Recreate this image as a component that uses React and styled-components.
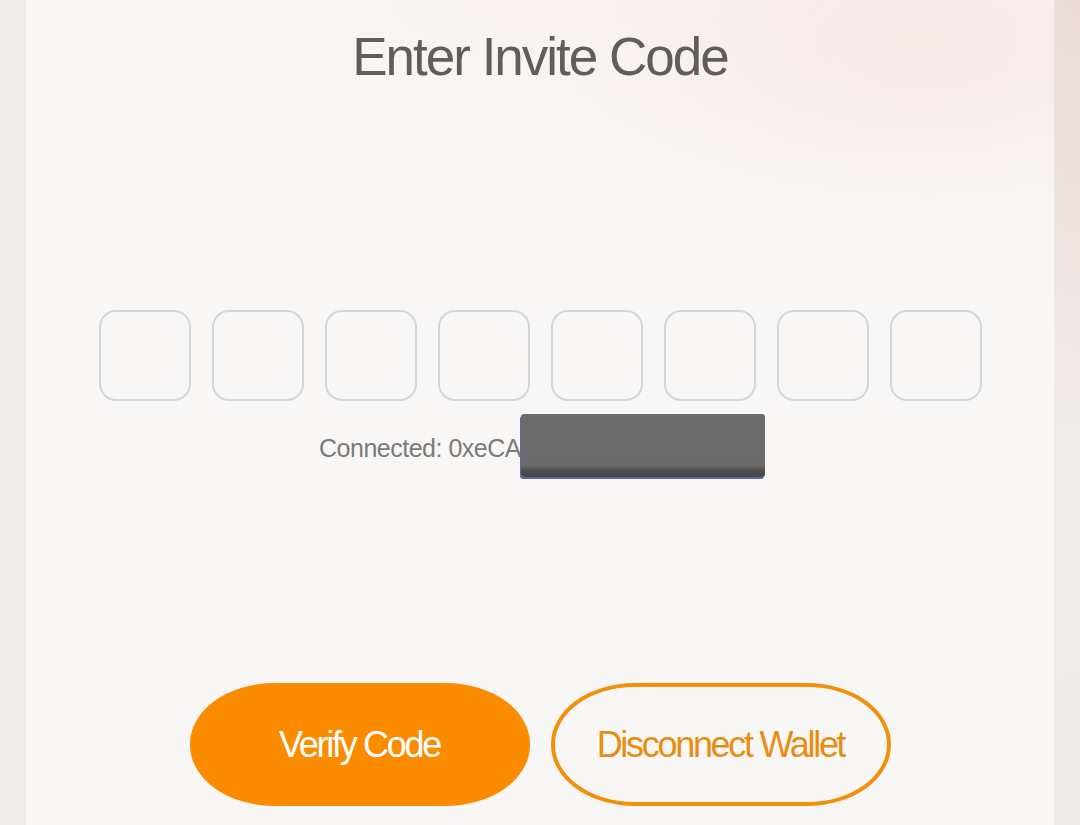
import React from "react";
import styled, { createGlobalStyle } from "styled-components";

const GlobalStyle = createGlobalStyle`
  html, body {
    margin: 0;
    padding: 0;
    background: #efeceb;
  }
  body {
    font-family: "Liberation Sans", Arial, sans-serif;
  }
`;

const Page = styled.div`
  width: 1080px;
  height: 825px;
  overflow: hidden;
  padding: 0 26px;
  box-sizing: border-box;
  background:
    linear-gradient(90deg, #eeebea 0%, #efeceb 50%, rgba(239, 236, 235, 0) 100%),
    linear-gradient(180deg, #ebd9d7 0%, #eee4e2 30%, #efeceb 55%, #eeeae9 100%);
`;

const Card = styled.main`
  height: 100%;
  display: flex;
  flex-direction: column;
  align-items: center;
  background:
    radial-gradient(ellipse 380px 200px at 900px 40px, rgba(245, 231, 229, 0.8), rgba(245, 231, 229, 0) 100%),
    radial-gradient(ellipse 700px 200px at 600px 0px, rgba(248, 240, 239, 0.6), rgba(248, 240, 239, 0) 100%),
    #f9f7f6;
`;

const Title = styled.h1`
  margin: 30px 0 0;
  font-size: 53px;
  line-height: 1;
  font-weight: 400;
  letter-spacing: -2px;
  color: #5f5e5c;
`;

const CodeRow = styled.div`
  margin-top: 227px;
  display: flex;
  gap: 21px;
`;

const CodeBox = styled.input`
  width: 92px;
  height: 91px;
  box-sizing: border-box;
  border: 2px solid #d4d6db;
  border-radius: 17px;
  background: transparent;
  outline: none;
  text-align: center;
  font-family: inherit;
  font-size: 36px;
  color: #5f5e5c;
`;

const Status = styled.div`
  margin-top: 35px;
  display: flex;
  align-items: flex-start;
  height: 25px;
  font-size: 25px;
  line-height: 1;
  letter-spacing: -0.5px;
  color: #7b7b7b;
  padding-left: 4px;
`;

const Address = styled.span`
  white-space: nowrap;
`;

const Redaction = styled.span`
  position: relative;
  top: -22px;
  flex: none;
  width: 244px;
  height: 63px;
  border-radius: 3px;
  background: linear-gradient(180deg, #6c6c6c 0%, #6a6a6a 82%, #4f4f4f 90%, #464646 100%);
  box-shadow: -1px 2px 0 #5b6aa5;
`;

const Actions = styled.div`
  margin-top: 222px;
  display: flex;
  gap: 21px;
`;

const Button = styled.button`
  width: 340px;
  height: 123px;
  box-sizing: border-box;
  border-radius: 84px / 61px;
  font-family: inherit;
  font-size: 36px;
  letter-spacing: -2.3px;
  cursor: pointer;
  border: 4px solid;
  background: ${(p) => (p.$outline ? "transparent" : "#fb8c00")};
  border-color: ${(p) => (p.$outline ? "#f2900c" : "#fb8c00")};
  color: ${(p) => (p.$outline ? "#e98d10" : "#ffffff")};
`;

export default function App() {
  const slots = Array.from({ length: 8 });
  return (
    <>
      <GlobalStyle />
      <Page>
        <Card>
          <Title>Enter Invite Code</Title>
          <CodeRow>
            {slots.map((_, i) => (
              <CodeBox key={i} maxLength={1} aria-label={`Code digit ${i + 1}`} />
            ))}
          </CodeRow>
          <Status>
            <Address>Connected: 0xeCA</Address>
            <Redaction />
          </Status>
          <Actions>
            <Button>Verify Code</Button>
            <Button $outline>Disconnect Wallet</Button>
          </Actions>
        </Card>
      </Page>
    </>
  );
}
